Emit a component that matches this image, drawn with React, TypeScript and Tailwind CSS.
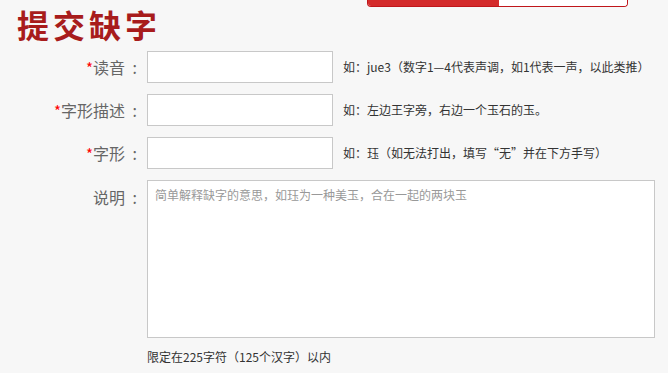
export default function App() {
  const font = "font-['Noto_Sans_CJK_SC','Noto_Sans_CJK_JP',sans-serif]";
  const Label = ({ text, req }: { text: string; req?: boolean }) => (
    <div className="w-[141px] shrink-0 text-right text-[16px] leading-[24px] text-[#666]">
      {req && <span className="text-[15px] text-[#ff0000]">*</span>}
      {text}
      <span className="inline-block w-[16px] pr-[4px] text-right">:</span>
    </div>
  );
  const Row = ({ label, hint }: { label: string; hint: string }) => (
    <div className="flex items-center">
      <Label text={label} req />
      <input className="ml-[6px] h-[32px] w-[186px] border border-[#c8c8c8] bg-white outline-none" />
      <div className="ml-[10px] text-[12px] leading-[18px] text-[#333]">{hint}</div>
    </div>
  );
  return (
    <div className={`min-h-[373px] w-[668px] overflow-hidden bg-[#f7f7f7] ${font}`}>
      <div className="ml-[367px] flex h-[7px] w-[261px] overflow-hidden rounded-b-[4px] border border-t-0 border-[#c0161b]">
        <div className="w-[131px] bg-[#d42b2b]" />
        <div className="flex-1 bg-white" />
      </div>
      <h1 className="ml-[17px] mt-[1px] text-[32px] font-bold leading-[32px] tracking-[4px] text-[#a81c1c]">
        提交缺字
      </h1>
      <div className="mt-[11px] flex flex-col gap-[11px]">
        <Row label="读音" hint="如：jue3（数字1—4代表声调，如1代表一声，以此类推）" />
        <Row label="字形描述" hint="如：左边王字旁，右边一个玉石的玉。" />
        <Row label="字形" hint="如：珏（如无法打出，填写“无”并在下方手写）" />
        <div className="flex items-start">
          <div className="pt-[5px]">
            <Label text="说明" />
          </div>
          <textarea
            className="ml-[6px] h-[158px] w-[508px] resize-none border border-[#c8c8c8] bg-white px-[7px] py-[5px] text-[12px] leading-[18px] text-[#333] outline-none placeholder:text-[#999]"
            placeholder="简单解释缺字的意思，如珏为一种美玉，合在一起的两块玉"
          />
        </div>
      </div>
      <div className="ml-[147px] mt-[10px] text-[12px] leading-[18px] text-[#333]">
        限定在225字符（125个汉字）以内
      </div>
    </div>
  );
}
